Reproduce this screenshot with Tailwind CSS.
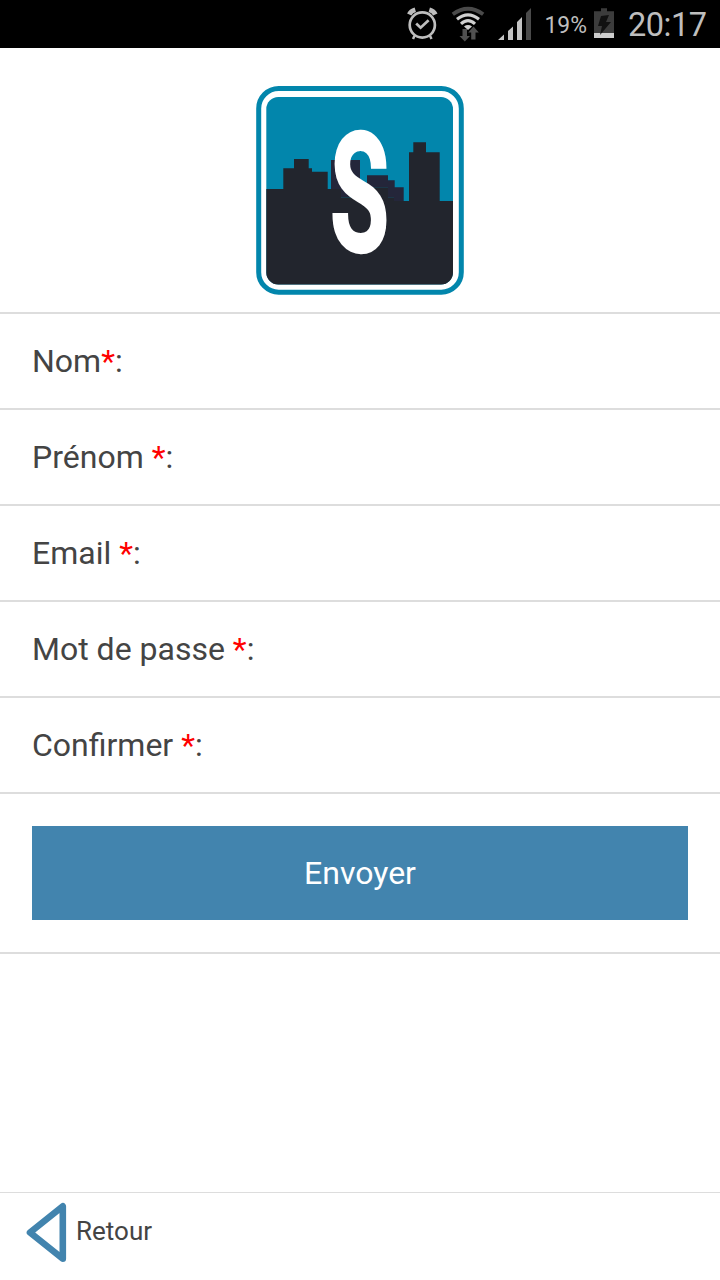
<!DOCTYPE html>
<html lang="fr">
<head>
  <meta charset="UTF-8">
  <title>Inscription</title>
  <script src="https://cdn.jsdelivr.net/npm/@tailwindcss/browser@4"></script>
</head>
<body class="bg-white font-['Roboto',sans-serif] text-[#444]">
  <div class="flex flex-col h-[1280px] w-[720px] overflow-hidden">

    <!-- status bar -->
    <div class="h-12 shrink-0 bg-black flex items-center justify-end pr-[14px] text-[#bebebe]">
      <svg class="w-[194px] h-12 shrink-0" viewBox="400 0 194 48" fill="none">
        <!-- alarm -->
        <g stroke="#bebebe">
          <circle cx="422.3" cy="25" r="12.6" stroke-width="2.7"/>
          <path d="M416.2 23.500l4.4 4.2 8-7.500" stroke-width="2.7"/>
          <path d="M409.300 14.500q1.500-3.500 6-4.800M435.300 14.500q-1.500-3.500-6-4.800" stroke-width="4.800"/>
          <path d="M414.500 35.700l-1.500 3.300M430 35.700l1.500 3.300" stroke-width="2.500"/>
        </g>
        <!-- wifi -->
        <path d="M452.800 14.300Q468 3.200 483.200 14.300" stroke="#4a4a4a" stroke-width="3.800"/>
        <path d="M457 19.300Q468 10.300 479 19.300M461 23.800Q468 17.300 475 23.800" stroke="#d0d0d0" stroke-width="3.100"/>
        <path d="M464 26.500q4-2.800 8 0l-4 3.500z" fill="#d0d0d0"/>
        <path d="M462.500 29h4.500v7h3l-5.200 5.500-5.300-5.500h3zM471.200 39.500v-7h-3l5.300-6 5.300 6h-3.300v7z" fill="#505050"/>
        <!-- signal -->
        <path d="M498 40l6-5.500V40zM508 31l5-4.500V40h-5zM517 22l5-5v23h-5z" fill="#c4c4c4"/>
        <path d="M526 13l5-5v32h-5z" fill="#4a4a4a"/>
        <text x="544.500" y="33" font-size="23.500" fill="#bebebe" textLength="42.500" lengthAdjust="spacingAndGlyphs">19%</text>
      </svg>
      <svg class="w-5 h-8 shrink-0 mr-[14px]" viewBox="0 0 20 32">
        <path d="M7 .3h6V3.300h7V26H0V3.300h7z" fill="#3c3c3c"/>
        <path d="M0 25h20v5H0z" fill="#cdcdcd"/>
        <path d="M7 8l8-1-3 7h5L6 27l2-9H4z" fill="#111"/>
      </svg>
      <span class="text-[32.500px] leading-none tracking-[-0.5px] w-[78px] pt-[3px] whitespace-nowrap">20:17</span>
    </div>

    <!-- logo -->
    <div class="h-[264px] shrink-0 flex justify-center pt-[37px]">
      <svg class="w-[208px] h-[210px]" viewBox="0 0 208 210">
        <defs>
          <clipPath id="tile"><rect x="10.300" y="12" width="186.700" height="187.500" rx="12"/></clipPath>
        </defs>
        <rect x="2.700" y="3.500" width="202.600" height="203.700" rx="20" fill="#fff" stroke="#0286ac" stroke-width="5"/>
        <g clip-path="url(#tile)">
          <rect x="10" y="12" width="188" height="188" fill="#0286ac"/>
          <path d="M10 104h17.300V83.300H38V74h14.700v9.300H56v3.400h15.700V104H85v8.300h17l12-10h18v10h6v3.700h15V67.300h4.300v-10H170v10h13.700V116H198v84H10z" fill="#22252d"/>
          <path d="M75 75h29v37H85v-8H75zM111 90.300h21v5h6.700v7h9V116H138v-3.700h-6v-10h-21z" fill="#24263a"/>
        </g>
        <text transform="translate(103.500 166.300) scale(.96 1.670)" text-anchor="middle" font-size="100" font-weight="700" fill="#fff" stroke="#fff" stroke-width="2" vector-effect="non-scaling-stroke">S</text>
      </svg>
    </div>

    <!-- form -->
    <form class="border-t-2 border-[#ddd] text-[32px] leading-[46px]">
      <label class="block h-24 pt-[24px] pl-8 border-b-2 border-[#ddd]">Nom<span class="text-[#f00]">*</span>:</label>
      <label class="block h-24 pt-[24px] pl-8 border-b-2 border-[#ddd]">Prénom <span class="text-[#f00]">*</span>:</label>
      <label class="block h-24 pt-[24px] pl-8 border-b-2 border-[#ddd]">Email <span class="text-[#f00]">*</span>:</label>
      <label class="block h-24 pt-[24px] pl-8 border-b-2 border-[#ddd]">Mot de passe <span class="text-[#f00]">*</span>:</label>
      <label class="block h-24 pt-[24px] pl-8 border-b-2 border-[#ddd]">Confirmer <span class="text-[#f00]">*</span>:</label>
      <div class="px-8 pt-8 pb-8 border-b-2 border-[#ddd]">
        <button type="button" class="block w-full h-[94px] bg-[#4284ae] text-white">Envoyer</button>
      </div>
    </form>

    <!-- footer -->
    <div class="mt-auto h-[88px] border-t border-[#ddd] flex items-start pl-[26px] pt-[9px]">
      <svg class="w-[41px] h-[62px]" viewBox="0 0 41 62" fill="none">
        <path d="M36.800 4.200v52.600L4 30.500z" stroke="#4284ae" stroke-width="6.600" stroke-linejoin="round"/>
      </svg>
      <span class="ml-[9px] mt-[10px] text-[26px] leading-[38px]">Retour</span>
    </div>
  </div>
</body>
</html>
